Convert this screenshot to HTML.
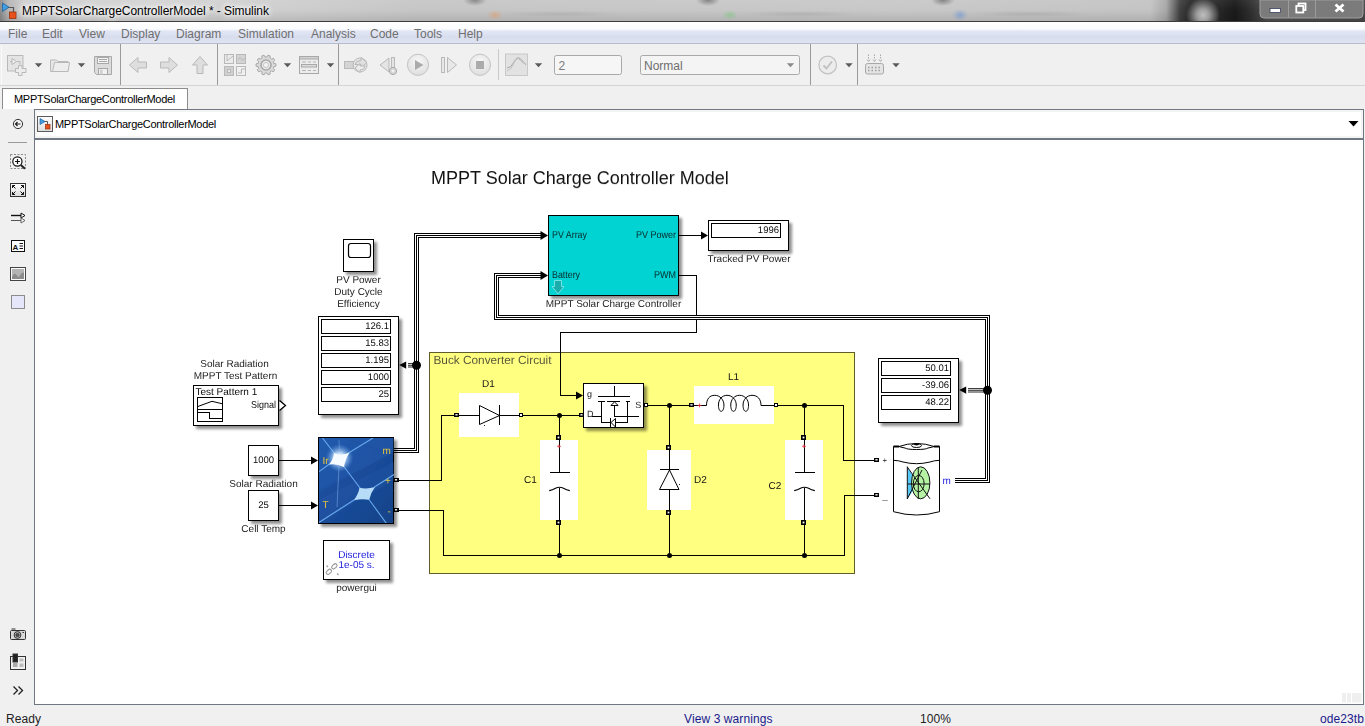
<!DOCTYPE html>
<html><head><meta charset="utf-8"><title>MPPTSolarChargeControllerModel * - Simulink</title>
<style>
html,body{margin:0;padding:0;width:1365px;height:726px;overflow:hidden;background:#f0f0f0;font-family:"Liberation Sans",sans-serif;}
.abs{position:absolute}
#titlebar{position:absolute;left:0;top:0;width:1365px;height:21px;background:radial-gradient(ellipse 8px 5px at 730px 15px,rgba(120,200,120,0.55),rgba(120,200,120,0)),radial-gradient(ellipse 8px 6px at 960px 15px,rgba(90,140,220,0.5),rgba(90,140,220,0)),radial-gradient(ellipse 8px 5px at 495px 15px,rgba(230,150,90,0.5),rgba(230,150,90,0)),radial-gradient(ellipse 12px 6px at 708px 0px,rgba(70,70,70,0.55),rgba(70,70,70,0)),radial-gradient(ellipse 12px 6px at 943px 0px,rgba(70,70,70,0.55),rgba(70,70,70,0)),radial-gradient(ellipse 12px 6px at 475px 0px,rgba(70,70,70,0.5),rgba(70,70,70,0)),radial-gradient(ellipse 60px 3px at 800px 14px,rgba(150,150,150,0.35),rgba(150,150,150,0)),radial-gradient(ellipse 60px 3px at 1030px 14px,rgba(150,150,150,0.35),rgba(150,150,150,0)),radial-gradient(ellipse 60px 3px at 560px 14px,rgba(150,150,150,0.3),rgba(150,150,150,0)),radial-gradient(circle at 1203px 15px,rgba(190,190,190,1) 0,rgba(170,170,170,0.9) 6px,rgba(90,90,90,0) 17px),linear-gradient(180deg,rgba(255,255,255,0.06) 0,rgba(0,0,0,0) 10px,rgba(0,0,0,0.10) 21px),linear-gradient(90deg,#8a8a8a 0px,#b4b4b4 8px,#cdcdcd 24px,#d4d4d4 150px,#cecece 290px,#c6c6c6 420px,#c8c8c8 900px,#c4c4c4 1150px,#a8a8a8 1166px,#404040 1180px,#2a2a2a 1190px,#2a2a2a 1215px,#1a1a1a 1235px,#2e2e2e 1250px,#505050 1268px,#4a4a4a 1365px);}
#titleline{position:absolute;left:0;top:21px;width:1365px;height:1px;background:#3c3c3c}
#title{position:absolute;left:22px;top:3px;font-size:12px;line-height:16px;letter-spacing:-0.06px;color:#000;white-space:nowrap;text-shadow:0 0 4px #fff,0 0 6px #fff,0 0 8px #fff}
#menubar{position:absolute;left:0;top:22px;width:1365px;height:21px;background:linear-gradient(180deg,#ffffff 0px,#fbfcfe 7px,#e3e7f4 9px,#d8ddee 15px,#dfe3f1 21px);border-bottom:1px solid #b6bccc}
#menubar span{position:absolute;top:5px;font-size:12px;line-height:15px;color:#6f6f6f;white-space:nowrap}
#toolbar{position:absolute;left:0;top:44px;width:1365px;height:41px;background:#f0f0f0;border-bottom:1px solid #d4d4d4}
#tab{position:absolute;left:2px;top:88px;width:186px;height:21px;background:#fff;border:1px solid #8c8c8c;border-bottom:none;box-sizing:border-box}
#tab span{position:absolute;left:11px;top:3px;font-size:11px;line-height:14px;letter-spacing:-0.3px;white-space:nowrap;color:#000}
#crumb{position:absolute;left:34px;top:109px;width:1330px;height:31px;background:#fff;border-top:1px solid #6f7783;border-left:1px solid #6f7783;border-right:1px solid #6f7783;border-bottom:2px solid #6f7783;box-sizing:border-box;box-shadow:inset 2px 2px 0 #f4f4f4,inset -2px -2px 0 #f4f4f4}
#crumb span{position:absolute;left:20px;top:7px;font-size:11px;line-height:14px;letter-spacing:-0.3px;white-space:nowrap;color:#000}
#canvas{position:absolute;left:34px;top:140px;width:1330px;height:565px;background:#fff;border-left:1px solid #6f7783;border-right:1px solid #6f7783;border-bottom:1px solid #6f7783;box-sizing:border-box}
#status{position:absolute;left:0;top:705px;width:1365px;height:21px;background:#f0f0f0}
#status span{position:absolute;top:6.5px;font-size:12px;letter-spacing:0.1px;line-height:14px;white-space:nowrap}
svg text{font-family:"Liberation Sans",sans-serif}
</style></head><body>
<div id="titlebar"></div><div id="titleline"></div>
<div id="title">MPPTSolarChargeControllerModel * - Simulink</div>
<div id="menubar">
<span style="left:8px">File</span><span style="left:42px">Edit</span><span style="left:79px">View</span><span style="left:121px">Display</span><span style="left:176px">Diagram</span><span style="left:238px">Simulation</span><span style="left:311px">Analysis</span><span style="left:370px">Code</span><span style="left:414px">Tools</span><span style="left:458px">Help</span>
</div>
<div id="toolbar"></div>
<div id="tab"><span>MPPTSolarChargeControllerModel</span></div>
<div id="crumb"><span>MPPTSolarChargeControllerModel</span></div>
<div id="canvas"></div>
<div id="status"><span style="left:6px;color:#222">Ready</span><span style="left:684px;color:#1a1a8c">View 3 warnings</span><span style="left:920px;color:#222">100%</span><span style="left:1320px;color:#1a1a8c">ode23tb</span></div>
<svg id="ov" class="abs" style="left:0;top:0" width="1365" height="726" viewBox="0 0 1365 726">
<!--CHROME-->
<defs><radialGradient id="btng" cx="0.5" cy="0.35" r="0.7"><stop offset="0" stop-color="#f8f8f8"/><stop offset="1" stop-color="#dcdcdc"/></radialGradient><linearGradient id="icbg" x1="0" y1="0" x2="0" y2="1"><stop offset="0" stop-color="#ffffff"/><stop offset="1" stop-color="#dcdcdc"/></linearGradient></defs>
<g><path d="M5,7.5H13.5V13" fill="none" stroke="#555" stroke-width="1.2"/><polygon points="2.5,3 2.5,11.5 9,7.2" fill="#3f9fe0" stroke="#1f5f9f" stroke-width="0.8"/><rect x="9.5" y="12" width="6.5" height="6.5" fill="#e8501c" stroke="#9c3008" stroke-width="0.8"/></g>
<path d="M1260,0V14Q1260,18 1264,18H1359Q1363,18 1363,14V0z" fill="#7b7b7b" stroke="#a0a0a0" stroke-width="1"/>
<path d="M1288.5,0V17.5M1315.5,0V17.5" stroke="#9c9c9c" stroke-width="1"/>
<rect x="1270" y="8.5" width="10.5" height="4" fill="#fff" stroke="#3a3f5a" stroke-width="0.8"/>
<g fill="none" stroke="#fff" stroke-width="1.8"><rect x="1298.5" y="3.5" width="7" height="6.5"/><rect x="1296.3" y="6" width="7" height="6.5" fill="#7b7b7b"/></g>
<path d="M1335.5,4.5L1343.5,11.5M1343.5,4.5L1335.5,11.5" stroke="#fff" stroke-width="2.8"/>
<path d="M120.5,44V85" stroke="#9a9a9a" stroke-width="1" shape-rendering="crispEdges"/>
<path d="M217.5,44V85" stroke="#9a9a9a" stroke-width="1" shape-rendering="crispEdges"/>
<path d="M338.5,44V85" stroke="#9a9a9a" stroke-width="1" shape-rendering="crispEdges"/>
<path d="M810.5,44V85" stroke="#9a9a9a" stroke-width="1" shape-rendering="crispEdges"/>
<path d="M857.5,44V85" stroke="#9a9a9a" stroke-width="1" shape-rendering="crispEdges"/>
<path d="M498.5,49V80" stroke="#c9c9c9" stroke-width="1" shape-rendering="crispEdges"/>
<path d="M1.5,45V85" stroke="#fafafa" stroke-width="1" shape-rendering="crispEdges"/>
<polygon points="34.8,63.2 42.2,63.2 38.5,67.2" fill="#5a5a5a"/>
<polygon points="77.8,63.2 85.2,63.2 81.5,67.2" fill="#5a5a5a"/>
<polygon points="283.8,63.2 291.2,63.2 287.5,67.2" fill="#5a5a5a"/>
<polygon points="326.8,63.2 334.2,63.2 330.5,67.2" fill="#5a5a5a"/>
<polygon points="534.8,63.2 542.2,63.2 538.5,67.2" fill="#5a5a5a"/>
<polygon points="845.3,63.2 852.7,63.2 849,67.2" fill="#5a5a5a"/>
<polygon points="892.3,63.2 899.7,63.2 896,67.2" fill="#5a5a5a"/>
<g fill="#e4e4e4" stroke="#b9b9b9" stroke-width="1"><rect x="7.5" y="55.5" width="15.5" height="15.5"/><path d="M18.5,65.5h3.5v3h4v4h-4v3h-3.5v-3h-3v-4h3z" fill="#ececec"/><path d="M10,61.5h4M17,61.5h3v3" fill="none"/><polygon points="12,58.5 12,64.5 16.5,61.5" fill="#f0f0f0"/></g>
<g fill="#e6e6e6" stroke="#b9b9b9" stroke-width="1"><path d="M50.5,60v11.5h17.5v-10h-10l-1.5,-1.5z"/><path d="M52.5,71.5l2,-9h15l-1.5,9z" fill="#ededed"/></g>
<g fill="#dcdcdc" stroke="#a8a8a8" stroke-width="1"><path d="M94.5,56.5h17v18h-15l-2,-2z"/><rect x="97.5" y="57.5" width="11" height="6" fill="#f4f4f4"/><path d="M99,59.5h8M99,61.5h8" /><rect x="98.5" y="68.5" width="9" height="6" fill="#f0f0f0"/><rect x="100" y="69.5" width="2.5" height="5" fill="#cfcfcf" stroke="none"/></g>
<g fill="#dedede" stroke="#b9b9b9" stroke-width="1"><path d="M129.5,65l8.5,-7.5v4.5h8.5v6h-8.5v4.5z"/><path d="M177.5,65l-8.5,-7.5v4.5h-8.5v6h8.5v4.5z"/><path d="M200,56.5l-7.5,8.5h4.5v8.500h6v-8.5h4.500z"/></g>
<g fill="#e0e0e0" stroke="#b9b9b9" stroke-width="1"><rect x="224.5" y="54.500" width="9" height="9" fill="#ececec"/><rect x="236.500" y="54.500" width="9" height="9" fill="#d4d4d4"/><rect x="224.500" y="66.5" width="9" height="9" fill="#d0d0d0"/><rect x="236.500" y="66.5" width="9" height="9" fill="#f0f0f0"/><path d="M227,54.500v6.500M227,61l6,-5M238,60q2,-4 3.500,-1t3.500,-1M238,73h3.500v-4h3.500" fill="none"/><rect x="227.500" y="69.500" width="3" height="3" fill="#e8e8e8"/></g>
<polygon points="273.84,63.41 275.93,63.80 275.93,66.20 273.84,66.59 273.28,68.32 274.74,69.87 273.33,71.80 271.41,70.89 269.93,71.97 270.21,74.07 267.93,74.81 266.91,72.95 265.09,72.95 264.07,74.81 261.79,74.07 262.07,71.97 260.59,70.89 258.67,71.80 257.26,69.87 258.72,68.32 258.16,66.59 256.07,66.20 256.07,63.80 258.16,63.41 258.72,61.68 257.26,60.13 258.67,58.20 260.59,59.11 262.07,58.03 261.79,55.93 264.07,55.19 265.09,57.05 266.91,57.05 267.93,55.19 270.21,55.93 269.93,58.03 271.41,59.11 273.33,58.20 274.74,60.13 273.28,61.68" fill="#dadada" stroke="#a8a8a8" stroke-width="1"/><circle cx="266" cy="65" r="5" fill="#ececec" stroke="#a8a8a8" stroke-width="1.6"/><circle cx="266" cy="65" r="2.6" fill="#f2f2f2" stroke="#b9b9b9" stroke-width="0.8"/>
<g fill="#ececec" stroke="#a8a8a8" stroke-width="1"><rect x="299.500" y="56.500" width="19" height="17"/><rect x="299.500" y="56.500" width="19" height="2.500" fill="#d2d2d2"/><rect x="301.500" y="64.500" width="15" height="2.500" fill="#dcdcdc"/><path d="M302,62h4M308,62h3M313,62h3M302,70.500h4M308,70.500h3M313,70.500h3" stroke="#b4b4b4"/></g>
<g fill="#d8d8d8" stroke="#b9b9b9" stroke-width="1"><rect x="344.500" y="61.500" width="9" height="7" fill="#d4d4d4"/><circle cx="360" cy="65" r="7" fill="#e4e4e4"/><path d="M355,64.500q1,-4 6,-4v-3l6,5l-6,5v-3q-3,0 -6,0z" fill="#e0e0e0"/><path d="M365,66.500q-1,3.500 -5,3.500v2.500l-5,-4.500l5,-4.500v2.500h5z" fill="#ececec"/></g>
<g fill="#e4e4e4" stroke="#b9b9b9" stroke-width="1"><polygon points="380,65 389,58 389,72"/><rect x="391.500" y="57.500" width="3" height="15"/><circle cx="393" cy="71" r="3.600" fill="#d8d8d8" stroke="#a8a8a8"/><circle cx="393" cy="71" r="1.200" fill="#f4f4f4" stroke="none"/></g>
<circle cx="418" cy="64.800" r="10.600" fill="url(#btng)" stroke="#c4c4c4" stroke-width="1"/>
<circle cx="480" cy="64.800" r="10.600" fill="url(#btng)" stroke="#c4c4c4" stroke-width="1"/>
<polygon points="415,60 415,70 423.500,65" fill="#ababab"/>
<rect x="476" y="61" width="8" height="8" fill="#ababab"/>
<g fill="#e8e8e8" stroke="#b9b9b9" stroke-width="1"><rect x="441.500" y="57.500" width="3" height="15"/><polygon points="447.500,57.500 447.500,72.500 456.500,65"/></g>
<g fill="#e2e2e2" stroke="#c8c8c8" stroke-width="1"><rect x="505.500" y="54" width="22" height="21.500"/><path d="M507,68q4,0 7,-6t6,-3.500t6,6.500" fill="none" stroke="#a8a8a8"/><path d="M507,71q4,-1 7,-8t6,-3t6,4" fill="none" stroke="#c0c0c0"/></g>
<rect x="554.500" y="55.500" width="67" height="19" rx="2" fill="#f6f6f6" stroke="#a9a9a9" stroke-width="1"/>
<text x="558.500" y="70" font-size="12" fill="#7a7a7a">2</text>
<rect x="640.500" y="55.500" width="159" height="19" rx="2" fill="#f4f4f4" stroke="#a9a9a9" stroke-width="1"/>
<text x="644" y="70" font-size="12" fill="#6e6e6e">Normal</text>
<polygon points="786.8,63.2 794.2,63.2 790.5,67.2" fill="#8a8a8a"/>
<circle cx="827.700" cy="65" r="8.800" fill="#ececec" stroke="#c2c2c2" stroke-width="1.200"/><path d="M823.500,65.500l3,3l5.500,-7" fill="none" stroke="#c0c0c0" stroke-width="1.800"/>
<g stroke="#a8a8a8" stroke-width="1" fill="#e4e4e4"><rect x="865.500" y="63.500" width="18" height="10.500" rx="2"/><path d="M868.500,54.500v5M874.500,54.500v5M880.500,54.500v5" stroke-dasharray="1.500,1"/><path d="M867,59.500l1.500,2l1.500,-2M873,59.500l1.500,2l1.500,-2M879,59.500l1.500,2l1.500,-2" fill="none"/><path d="M868,67.500h1.500M871.500,67.500h1.500M875,67.500h1.500M878.500,67.500h1.500M868,70.500h1.500M871.500,70.500h1.500M875,70.500h1.500M878.500,70.500h1.500" stroke="#a0a0a0" stroke-width="1.500"/></g>
<rect x="37.500" y="116.500" width="15" height="15" fill="url(#icbg)" stroke="#5a5a5a" stroke-width="1"/>
<g><path d="M41,121.500H47.500V125" fill="none" stroke="#555" stroke-width="1"/><polygon points="40,118.500 40,124.500 45,121.500" fill="#3f9fe0" stroke="#1f5f9f" stroke-width="0.700"/><rect x="45.500" y="124.500" width="4.500" height="4.500" fill="#e8501c" stroke="#9c3008" stroke-width="0.700"/></g>
<polygon points="1348.500,121 1358.500,121 1353.500,126.500" fill="#000"/>
<circle cx="18" cy="124" r="4.600" fill="#f4f4f4" stroke="#333" stroke-width="1"/><path d="M15.500,124h5M17.500,122l-2,2l2,2" fill="none" stroke="#222" stroke-width="1.200"/>
<path d="M8,142.500H27" stroke="#9a9a9a" stroke-width="1" shape-rendering="crispEdges"/>
<rect x="10.500" y="154.500" width="15" height="14" fill="none" stroke="#888" stroke-width="1" stroke-dasharray="2,1.500"/><circle cx="17.400" cy="161.500" r="4.600" fill="#fff" stroke="#111" stroke-width="1.200"/><path d="M15,161.500h5M17.500,159v5" stroke="#111" stroke-width="1.200"/><path d="M20.800,165l4.200,3.800" stroke="#222" stroke-width="2"/>
<rect x="10.500" y="183.500" width="15" height="13" fill="url(#icbg)" stroke="#333" stroke-width="1"/><path d="M12.500,188v-2.500h2.500M12.500,185.500l3,3M23.500,188v-2.500h-2.500M23.500,185.500l-3,3M12.500,192v2.500h2.500M12.500,194.500l3,-3M23.500,192v2.500h-2.500M23.500,194.500l-3,-3" fill="none" stroke="#111" stroke-width="1"/>
<path d="M11,215.500h11" stroke="#111" stroke-width="1.400"/><path d="M11,220.500h11" stroke="#555" stroke-width="1"/><path d="M21,213l4,2.500l-4,2.500z" fill="#fff" stroke="#111" stroke-width="1"/><path d="M21,218l4,2.500l-4,2.500z" fill="#fff" stroke="#555" stroke-width="0.900"/>
<rect x="11.500" y="240.500" width="13" height="11" fill="#fff" stroke="#111" stroke-width="1"/><text x="12.500" y="249.500" font-size="8" font-weight="bold" fill="#111">A</text><path d="M19.500,243.500h3.500M19.500,246h3.500M19.500,248.500h3.500" stroke="#111" stroke-width="1"/>
<rect x="10.500" y="267.500" width="15" height="13" fill="#fafafa" stroke="#444" stroke-width="1"/><rect x="12" y="269" width="12" height="10" fill="#b4b4b4"/><path d="M12,277q2,-5.500 4.500,-2t3.500,0.500t4,-3v6.500h-12z" fill="#8c8c8c"/>
<rect x="11.500" y="295.500" width="13" height="13" fill="#e6e6fa" stroke="#8c8c8c" stroke-width="1"/>
<g stroke="#333" stroke-width="1" fill="#d8d8d8"><path d="M11.500,629h4"/><rect x="10.500" y="630.500" width="15" height="9" rx="1"/><circle cx="17.500" cy="635" r="3.400" fill="#bbb"/><circle cx="17.500" cy="635" r="1.600" fill="#555"/><path d="M22.500,632.500h1.500" /></g>
<g stroke="#333" stroke-width="1"><rect x="10.500" y="656.500" width="15" height="13" fill="#f0f0f0"/><rect x="13" y="654" width="4.500" height="8" fill="#222"/><rect x="13" y="663" width="4.500" height="4" fill="#aaa" stroke="none"/><rect x="19.500" y="658.500" width="4" height="3" fill="#bbb" stroke="none"/><rect x="19.500" y="663.500" width="4" height="3.500" fill="#bbb" stroke="none"/></g>
<path d="M13.500,686.500l4,4l-4,4M18.500,686.500l4,4l-4,4" fill="none" stroke="#222" stroke-width="1.300"/>
<g fill="#efefef"><rect x="1342" y="693" width="4" height="9.500"/><rect x="1347" y="693" width="4" height="9.500"/><rect x="1352" y="693" width="9.500" height="9.500"/></g>
<!--/CHROME-->
<g opacity="0.999"><!--DIAGRAM-->
<defs><filter id="sh" x="-20%" y="-20%" width="150%" height="150%"><feGaussianBlur in="SourceAlpha" stdDeviation="1.7"/><feOffset dx="3" dy="2.6"/><feComponentTransfer><feFuncA type="linear" slope="0.45"/></feComponentTransfer><feMerge><feMergeNode/><feMergeNode in="SourceGraphic"/></feMerge></filter>
<linearGradient id="pvg" x1="0" y1="0" x2="1" y2="1"><stop offset="0" stop-color="#1e54a6"/><stop offset="0.5" stop-color="#1a4c9a"/><stop offset="1" stop-color="#154288"/></linearGradient>
<radialGradient id="glow" cx="0.5" cy="0.5" r="0.5"><stop offset="0" stop-color="#fff" stop-opacity="1"/><stop offset="0.35" stop-color="#d8ecff" stop-opacity="0.9"/><stop offset="1" stop-color="#5fa0e8" stop-opacity="0"/></radialGradient>
<clipPath id="pvclip"><rect x="319" y="438" width="75" height="85"/></clipPath>
</defs>
<g shape-rendering="crispEdges">
</g>
<text x="431" y="184" font-size="18" text-anchor="start" fill="#111" transform="rotate(0.03 431 184)" >MPPT Solar Charge Controller Model</text>
<rect x="429.5" y="352.5" width="425" height="221" fill="#ffff80" stroke="#5e5e2c" stroke-width="1" shape-rendering="crispEdges"/>
<text x="433.5" y="364" font-size="11.8" text-anchor="start" fill="#58583a" transform="rotate(0.03 433.5 364)" >Buck Converter Circuit</text>
<g shape-rendering="crispEdges">
<polyline points="394,448.5 414.5,448.5 414.5,233.5 541,233.5" fill="none" stroke="#000" stroke-width="1" />
<polyline points="394,450.5 416.5,450.5 416.5,235.5 541,235.5" fill="none" stroke="#000" stroke-width="1" />
<polyline points="394,452.5 418.5,452.5 418.5,237.5 541,237.5" fill="none" stroke="#000" stroke-width="1" />
<polyline points="955,478.5 985.5,478.5 985.5,319.5 494.5,319.5 494.5,273.5 541,273.5" fill="none" stroke="#000" stroke-width="1" />
<polyline points="955,480.5 987.5,480.5 987.5,317.5 496.5,317.5 496.5,275.5 541,275.5" fill="none" stroke="#000" stroke-width="1" />
<polyline points="955,482.5 989.5,482.5 989.5,315.5 498.5,315.5 498.5,277.5 541,277.5" fill="none" stroke="#000" stroke-width="1" />
</g>
<circle cx="416.5" cy="365.2" r="4.5" fill="#000"/>
<circle cx="987.5" cy="390.2" r="4.5" fill="#000"/>
<path d="M408,363.6H414M968,388.6H985" stroke="#000" stroke-width="0.85" fill="none"/>
<path d="M408,365.3H414M968,390.3H985" stroke="#000" stroke-width="0.85" fill="none"/>
<path d="M408,367.0H414M968,392.0H985" stroke="#000" stroke-width="0.85" fill="none"/>
<polygon points="548,235.5 540.5,231.0 540.5,240.0" fill="#000"/>
<polygon points="548,275.5 540.5,271.0 540.5,280.0" fill="#000"/>
<polygon points="399.2,365.1 406.2,361.40000000000003 406.2,368.8" fill="#000"/>
<polygon points="959.2,390.1 966.2,386.40000000000003 966.2,393.8" fill="#000"/>
<g shape-rendering="crispEdges">
<polyline points="679,275.5 696.5,275.5 696.5,315 696.5,332.5 560.5,332.5 560.5,395.5 577,395.5" fill="none" stroke="#000" stroke-width="1" />
<rect x="695" y="315" width="3" height="5" fill="#fff"/>
<polyline points="690,315.5 703,315.5" fill="none" stroke="#000" stroke-width="1" />
<polyline points="690,317.5 703,317.5" fill="none" stroke="#000" stroke-width="1" />
<polyline points="690,319.5 703,319.5" fill="none" stroke="#000" stroke-width="1" />
<polyline points="696.5,320 696.5,332.5" fill="none" stroke="#000" stroke-width="1" />
<polyline points="679,235.5 702,235.5" fill="none" stroke="#000" stroke-width="1" />
<polyline points="279,460.5 312,460.5" fill="none" stroke="#000" stroke-width="1" />
<polyline points="279,505.5 312,505.5" fill="none" stroke="#000" stroke-width="1" />
<polyline points="398,480.5 441.5,480.5 441.5,415.5 455,415.5" fill="none" stroke="#000" stroke-width="1" />
<polyline points="398,510.5 443.5,510.5 443.5,555.5 844.5,555.5 844.5,495.5 874,495.5" fill="none" stroke="#000" stroke-width="1" />
<polyline points="523,415.5 579,415.5" fill="none" stroke="#000" stroke-width="1" />
<polyline points="648,405.5 690,405.5" fill="none" stroke="#000" stroke-width="1" />
<polyline points="778,405.5 843.5,405.5 843.5,460.5 874,460.5" fill="none" stroke="#000" stroke-width="1" />
<polyline points="559.5,415.5 559.5,436" fill="none" stroke="#000" stroke-width="1" />
<polyline points="559.5,523 559.5,555.5" fill="none" stroke="#000" stroke-width="1" />
<polyline points="669.5,405.5 669.5,446" fill="none" stroke="#000" stroke-width="1" />
<polyline points="669.5,513 669.5,555.5" fill="none" stroke="#000" stroke-width="1" />
<polyline points="804.5,405.5 804.5,436" fill="none" stroke="#000" stroke-width="1" />
<polyline points="804.5,523 804.5,555.5" fill="none" stroke="#000" stroke-width="1" />
</g>
<polygon points="583,395.5 576,391.5 576,399.5" fill="#000"/>
<polygon points="708,235.5 701,231.5 701,239.5" fill="#000"/>
<polygon points="318,460.5 311,456.5 311,464.5" fill="#000"/>
<polygon points="318,505.5 311,501.5 311,509.5" fill="#000"/>
<circle cx="559.5" cy="415.5" r="2.5" fill="#000"/>
<circle cx="669.5" cy="405.5" r="2.5" fill="#000"/>
<circle cx="804.5" cy="405.5" r="2.5" fill="#000"/>
<circle cx="559.5" cy="555.5" r="2.5" fill="#000"/>
<circle cx="669.5" cy="555.5" r="2.5" fill="#000"/>
<circle cx="804.5" cy="555.5" r="2.5" fill="#000"/>
<rect x="343.5" y="239.5" width="30" height="32" fill="#fff" stroke="#000" stroke-width="1" filter="url(#sh)"/>
<rect x="348.5" y="243.5" width="22" height="14" rx="2.5" ry="2.5" fill="#fff" stroke="#000" stroke-width="1.2"/>
<text x="358.5" y="283" font-size="10" text-anchor="middle" fill="#1c1c1c" transform="rotate(0.03 358.5 283)" >PV Power</text>
<text x="358.5" y="295" font-size="10" text-anchor="middle" fill="#1c1c1c" transform="rotate(0.03 358.5 295)" >Duty Cycle</text>
<text x="358.5" y="307" font-size="10" text-anchor="middle" fill="#1c1c1c" transform="rotate(0.03 358.5 307)" >Efficiency</text>
<rect x="318.5" y="316.5" width="80" height="98" fill="#fff" stroke="#000" stroke-width="1" filter="url(#sh)"/>
<rect x="321.5" y="319.5" width="69" height="14" fill="#fff" stroke="#000" stroke-width="1"/>
<text x="389" y="329" font-size="9.5" text-anchor="end" fill="#0a0a0a" transform="rotate(0.03 389 329)" >126.1</text>
<rect x="321.5" y="336.5" width="69" height="14" fill="#fff" stroke="#000" stroke-width="1"/>
<text x="389" y="346" font-size="9.5" text-anchor="end" fill="#0a0a0a" transform="rotate(0.03 389 346)" >15.83</text>
<rect x="321.5" y="353.5" width="69" height="14" fill="#fff" stroke="#000" stroke-width="1"/>
<text x="389" y="363" font-size="9.5" text-anchor="end" fill="#0a0a0a" transform="rotate(0.03 389 363)" >1.195</text>
<rect x="321.5" y="370.5" width="69" height="14" fill="#fff" stroke="#000" stroke-width="1"/>
<text x="389" y="380" font-size="9.5" text-anchor="end" fill="#0a0a0a" transform="rotate(0.03 389 380)" >1000</text>
<rect x="321.5" y="387.5" width="69" height="14" fill="#fff" stroke="#000" stroke-width="1"/>
<text x="389" y="397" font-size="9.5" text-anchor="end" fill="#0a0a0a" transform="rotate(0.03 389 397)" >25</text>
<rect x="708.5" y="220.5" width="80" height="30" fill="#fff" stroke="#000" stroke-width="1" filter="url(#sh)"/>
<rect x="711.5" y="223.5" width="69" height="14" fill="#fff" stroke="#000" stroke-width="1"/>
<text x="779" y="233" font-size="9.5" text-anchor="end" fill="#0a0a0a" transform="rotate(0.03 779 233)" >1996</text>
<text x="749" y="262" font-size="10" text-anchor="middle" fill="#1c1c1c" transform="rotate(0.03 749 262)" >Tracked PV Power</text>
<rect x="878.5" y="358.5" width="80" height="64" fill="#fff" stroke="#000" stroke-width="1" filter="url(#sh)"/>
<rect x="881.5" y="361.5" width="69" height="14" fill="#fff" stroke="#000" stroke-width="1"/>
<text x="949" y="371" font-size="9.5" text-anchor="end" fill="#0a0a0a" transform="rotate(0.03 949 371)" >50.01</text>
<rect x="881.5" y="378.5" width="69" height="14" fill="#fff" stroke="#000" stroke-width="1"/>
<text x="949" y="388" font-size="9.5" text-anchor="end" fill="#0a0a0a" transform="rotate(0.03 949 388)" >-39.06</text>
<rect x="881.5" y="395.5" width="69" height="14" fill="#fff" stroke="#000" stroke-width="1"/>
<text x="949" y="405" font-size="9.5" text-anchor="end" fill="#0a0a0a" transform="rotate(0.03 949 405)" >48.22</text>
<rect x="548.5" y="215.5" width="130" height="80" fill="#00d2d2" stroke="#000" stroke-width="1" filter="url(#sh)"/>
<text x="552" y="238" font-size="10" text-anchor="start" fill="#0a2a2a" transform="rotate(0.03 552 238)" textLength="35" lengthAdjust="spacingAndGlyphs">PV Array</text>
<text x="676" y="238" font-size="10" text-anchor="end" fill="#0a2a2a" transform="rotate(0.03 676 238)" textLength="40" lengthAdjust="spacingAndGlyphs">PV Power</text>
<text x="552" y="278" font-size="10" text-anchor="start" fill="#0a2a2a" transform="rotate(0.03 552 278)" textLength="28" lengthAdjust="spacingAndGlyphs">Battery</text>
<text x="676" y="278" font-size="10" text-anchor="end" fill="#0a2a2a" transform="rotate(0.03 676 278)" textLength="22" lengthAdjust="spacingAndGlyphs">PWM</text>
<text x="613.5" y="307" font-size="10" text-anchor="middle" fill="#1c1c1c" transform="rotate(0.03 613.5 307)" >MPPT Solar Charge Controller</text>
<path d="M554.5 280.5h7v6h2.5l-6 7.5l-6-7.5h2.5z" fill="#1fa8a8" stroke="#7fe6e6" stroke-width="1" opacity="0.9"/>
<text x="234.5" y="367" font-size="10" text-anchor="middle" fill="#1c1c1c" transform="rotate(0.03 234.5 367)" >Solar Radiation</text>
<text x="235.5" y="379" font-size="10" text-anchor="middle" fill="#1c1c1c" transform="rotate(0.03 235.5 379)" >MPPT Test Pattern</text>
<rect x="193.5" y="385.5" width="85" height="40" fill="#fff" stroke="#000" stroke-width="1" filter="url(#sh)"/>
<text x="195.5" y="395" font-size="10" text-anchor="start" fill="#0a0a0a" transform="rotate(0.03 195.5 395)" >Test Pattern 1</text>
<text x="276" y="408" font-size="10" text-anchor="end" fill="#0a0a0a" transform="rotate(0.03 276 408)" textLength="25" lengthAdjust="spacingAndGlyphs">Signal</text>
<rect x="197.5" y="397.5" width="25" height="24" fill="#fff" stroke="#000" stroke-width="1"/>
<polyline points="197.6,406.6 212,401.3 222.4,403.8" fill="none" stroke="#000" stroke-width="1" />
<polyline points="198,409.5 222,409.5" fill="none" stroke="#000" stroke-width="1" shape-rendering="crispEdges"/>
<polyline points="198,412.5 209.5,412.5 209.5,418.5 222,418.5" fill="none" stroke="#000" stroke-width="1" shape-rendering="crispEdges"/>
<polyline points="279.5,400.5 285.5,405.5 279.5,410.5" fill="#fff" stroke="#000" stroke-width="1.3"/>
<rect x="248.5" y="445.5" width="30" height="30" fill="#fff" stroke="#000" stroke-width="1" filter="url(#sh)"/>
<text x="263.5" y="463" font-size="9.5" text-anchor="middle" fill="#0a0a0a" transform="rotate(0.03 263.5 463)" >1000</text>
<text x="263.5" y="487" font-size="10" text-anchor="middle" fill="#1c1c1c" transform="rotate(0.03 263.5 487)" >Solar Radiation</text>
<rect x="248.5" y="490.5" width="30" height="30" fill="#fff" stroke="#000" stroke-width="1" filter="url(#sh)"/>
<text x="263.5" y="508" font-size="9.5" text-anchor="middle" fill="#0a0a0a" transform="rotate(0.03 263.5 508)" >25</text>
<text x="263.5" y="532" font-size="10" text-anchor="middle" fill="#1c1c1c" transform="rotate(0.03 263.5 532)" >Cell Temp</text>
<rect x="318.5" y="437.5" width="75" height="86" fill="url(#pvg)" stroke="#000" stroke-width="1" filter="url(#sh)"/>
<g clip-path="url(#pvclip)">
<polygon points="319,438 394,438 394,452 319,492" fill="#2c66bc" opacity="0.30"/>
<polygon points="319,500 394,462 394,480 319,523" fill="#2a60b4" opacity="0.25"/>
<g stroke="#1b4a96" stroke-width="0.6" opacity="0.5"><path d="M330,523L394,480M340,523L394,490M319,490L360,470M350,440L394,455"/></g>
<g stroke="#66a8ec" stroke-width="1.15" fill="none" stroke-linecap="round"><path d="M322.5,438L334.5,453.5"/><path d="M348.5,453L373,438"/><path d="M329.5,464L318.5,472"/><path d="M343.5,466L360,488"/><path d="M374.5,487L394,474.5"/><path d="M354,500L319,522.5"/><path d="M369,499.5L386.500,523.500"/></g>
<ellipse cx="339.500" cy="458" rx="14" ry="14" fill="url(#glow)"/>
<path d="M339,466L337,507" stroke="#8fc0f4" stroke-width="1" opacity="0.45"/>
<path d="M339,440L339.500,452" stroke="#8fc0f4" stroke-width="1" opacity="0.4"/>
<path d="M334,453 Q341,456.500 349.500,452.500 Q345,460 344,467 Q337,463.500 329,464.500 Q333.500,459 334,453z" fill="#f6fbff"/>
<path d="M359.500,487.800 Q367,489.500 375,487 Q370.500,493 369.200,499.800 Q361.500,498.500 353.800,500.300 Q358.500,494 359.500,487.800z" fill="#b6dcf8"/>
</g>
<text x="322.5" y="464" font-size="10" text-anchor="start" fill="#e6c63a" transform="rotate(0.03 322.5 464)" >Ir</text>
<text x="322.5" y="508" font-size="10" text-anchor="start" fill="#e6c63a" transform="rotate(0.03 322.5 508)" >T</text>
<text x="382.5" y="454" font-size="10" text-anchor="start" fill="#e6c63a" transform="rotate(0.03 382.5 454)" >m</text>
<text x="385" y="484" font-size="10" text-anchor="start" fill="#e6c63a" transform="rotate(0.03 385 484)" >+</text>
<text x="387.5" y="514.5" font-size="10" text-anchor="start" fill="#e6c63a" transform="rotate(0.03 387.5 514.5)" >-</text>
<rect x="393.5" y="478" width="5" height="4" fill="#000" shape-rendering="crispEdges"/><rect x="394.9" y="479.1" width="2.2" height="1.4" fill="#fff"/>
<rect x="393.5" y="508" width="5" height="4" fill="#000" shape-rendering="crispEdges"/><rect x="394.9" y="509.1" width="2.2" height="1.4" fill="#fff"/>
<rect x="323.5" y="540.5" width="66" height="39" fill="#fff" stroke="#000" stroke-width="1" filter="url(#sh)"/>
<text x="356.5" y="558" font-size="10" text-anchor="middle" fill="#2222dd" transform="rotate(0.03 356.5 558)" >Discrete</text>
<text x="356.5" y="568" font-size="10" text-anchor="middle" fill="#2222dd" transform="rotate(0.03 356.5 568)" >1e-05 s.</text>
<text x="356.5" y="591" font-size="10" text-anchor="middle" fill="#1c1c1c" transform="rotate(0.03 356.5 591)" >powergui</text>
<g stroke="#9a9a9a" stroke-width="1.1" fill="none"><rect x="326" y="570" width="6" height="3.6" rx="1.8" transform="rotate(-45 329 572)"/><rect x="331.5" y="564.5" width="6" height="3.6" rx="1.8" transform="rotate(-45 334.5 566.5)"/><path d="M326.5,565.5l1.5,1.5M337,573.5l1.5,1.5"/></g>
<rect x="459" y="393" width="60" height="44" fill="#fff"/>
<text x="488.5" y="387" font-size="10" text-anchor="middle" fill="#111" transform="rotate(0.03 488.5 387)" >D1</text>
<polyline points="459,415.5 519,415.5" fill="none" stroke="#000" stroke-width="1" shape-rendering="crispEdges"/>
<polygon points="479.5,405.5 479.5,424.5 499.5,415.5" fill="#fff" stroke="#000" stroke-width="1"/>
<polyline points="499.5,405 499.5,425" fill="none" stroke="#000" stroke-width="1" shape-rendering="crispEdges"/>
<rect x="484" y="425" width="1" height="1" fill="#222"/>
<rect x="454.0" y="413" width="5" height="4" fill="#000" shape-rendering="crispEdges"/><rect x="455.4" y="414.1" width="2.2" height="1.4" fill="#fff"/>
<rect x="519.5" y="413.5" width="3" height="3" fill="#fff" stroke="#000" stroke-width="1" shape-rendering="crispEdges"/>
<rect x="583.5" y="383.5" width="60" height="44" fill="#fff" stroke="#000" stroke-width="1" filter="url(#sh)"/>
<text x="587" y="397" font-size="9" text-anchor="start" fill="#222" transform="rotate(0.03 587 397)" >g</text>
<text x="587" y="417" font-size="9" text-anchor="start" fill="#222" transform="rotate(0.03 587 417)" >D</text>
<text x="635.3" y="408" font-size="9" text-anchor="start" fill="#222" transform="rotate(0.03 635.3 408)" >S</text>
<g shape-rendering="crispEdges" stroke="#000" stroke-width="1" fill="none">
<path d="M614.5,385.5v11M598,396.5h31.5M598,401.5h7M607,401.5h13M625.5,401.5h4M601.5,401v22M627.5,401v22M601.5,422.5h9M615.5,422.5h12.5M592,416.5h9.5M614.5,404v12.5h24"/>
</g>
<polygon points="614.5,402 610.8,405.5 618.2,405.5" fill="#fff" stroke="#000" stroke-width="1"/>
<path d="M615.5,418.5v8.5M615.5,418.5l-4.500,4l4.500,4.500" fill="none" stroke="#000" stroke-width="1"/>
<polyline points="610.5,418 610.5,427" fill="none" stroke="#000" stroke-width="1" shape-rendering="crispEdges"/>
<rect x="579.0" y="413" width="5" height="4" fill="#000" shape-rendering="crispEdges"/><rect x="580.4" y="414.1" width="2.2" height="1.4" fill="#fff"/>
<rect x="644.5" y="403.5" width="3" height="3" fill="#fff" stroke="#000" stroke-width="1" shape-rendering="crispEdges"/>
<rect x="694" y="386" width="80" height="38" fill="#fff"/>
<text x="733.5" y="380" font-size="10" text-anchor="middle" fill="#111" transform="rotate(0.03 733.5 380)" >L1</text>
<path d="M694,405.5H706.5C706.5,399 709.5,395.3 714.7,395.3 C720.2,395.3 723.95,400 723.95,405 C723.95,409 722.8000000000001,411.3 721.2,411.3 C719.6,411.3 718.45,409 718.45,405 C718.45,399.500 722,395.3 727,395.3 C732.5,395.3 736.25,400 736.25,405 C736.25,409 735.1,411.3 733.5,411.3 C731.9,411.3 730.75,409 730.75,405 C730.75,399.500 734.5,395.3 739.5,395.3 C745.0,395.3 748.55,400 748.55,405 C748.55,409 747.4,411.3 745.8,411.3 C744.1999999999999,411.3 743.05,409 743.05,405 C743.05,399.500 747,395.3 752,395.3 C757.5,395.3 761,399 761,405.5 H774" fill="none" stroke="#000" stroke-width="1"/>
<path d="M697.6,405.4h3.8M699.5,403.5v3.8" stroke="#f0303c" stroke-width="1" opacity="0.85"/>
<rect x="689.0" y="403" width="5" height="4" fill="#000" shape-rendering="crispEdges"/><rect x="690.4" y="404.1" width="2.2" height="1.4" fill="#fff"/>
<rect x="774.5" y="403.5" width="3" height="3" fill="#fff" stroke="#000" stroke-width="1" shape-rendering="crispEdges"/>
<rect x="540" y="440" width="38" height="80" fill="#fff"/>
<g shape-rendering="crispEdges">
<polyline points="559.5,440 559.5,472" fill="none" stroke="#000" stroke-width="1" />
<polyline points="549.5,472.5 569.5,472.5" fill="none" stroke="#000" stroke-width="1" />
<polyline points="559.5,488 559.5,520" fill="none" stroke="#000" stroke-width="1" />
</g>
<path d="M549.2,490.6 Q552.5,490 555.5,488.2 Q557.5,487.3 559.5,487.3 Q561.5,487.3 563.5,488.2 Q566.5,490 569.8,490.6" fill="none" stroke="#000" stroke-width="1.1"/>
<path d="M557.1,446.3h3.8M559.0,444.4v3.8" stroke="#f0303c" stroke-width="1" opacity="0.85"/>
<rect x="556.0" y="435.0" width="5" height="5" fill="#000" shape-rendering="crispEdges"/><rect x="557.6" y="436.6" width="1.8" height="1.8" fill="#fff"/>
<rect x="556.0" y="520.0" width="5" height="5" fill="#000" shape-rendering="crispEdges"/><rect x="557.6" y="521.6" width="1.8" height="1.8" fill="#fff"/>
<text x="524" y="483" font-size="10" text-anchor="start" fill="#111" transform="rotate(0.03 524 483)" >C1</text>
<rect x="785" y="440" width="38" height="80" fill="#fff"/>
<g shape-rendering="crispEdges">
<polyline points="804.5,440 804.5,472" fill="none" stroke="#000" stroke-width="1" />
<polyline points="794.5,472.5 814.5,472.5" fill="none" stroke="#000" stroke-width="1" />
<polyline points="804.5,488 804.5,520" fill="none" stroke="#000" stroke-width="1" />
</g>
<path d="M794.2,490.6 Q797.5,490 800.5,488.2 Q802.5,487.3 804.5,487.3 Q806.5,487.3 808.5,488.2 Q811.5,490 814.8,490.6" fill="none" stroke="#000" stroke-width="1.1"/>
<path d="M802.1,446.3h3.8M804.0,444.4v3.8" stroke="#f0303c" stroke-width="1" opacity="0.85"/>
<rect x="801.0" y="435.0" width="5" height="5" fill="#000" shape-rendering="crispEdges"/><rect x="802.6" y="436.6" width="1.8" height="1.8" fill="#fff"/>
<rect x="801.0" y="520.0" width="5" height="5" fill="#000" shape-rendering="crispEdges"/><rect x="802.6" y="521.6" width="1.8" height="1.8" fill="#fff"/>
<text x="768.5" y="489" font-size="10" text-anchor="start" fill="#111" transform="rotate(0.03 768.5 489)" >C2</text>
<rect x="647" y="450" width="44" height="60" fill="#fff"/>
<text x="694" y="483" font-size="10" text-anchor="start" fill="#111" transform="rotate(0.03 694 483)" >D2</text>
<g shape-rendering="crispEdges">
<polyline points="669.5,450 669.5,510" fill="none" stroke="#000" stroke-width="1" />
<polyline points="659.5,469.5 679,469.5" fill="none" stroke="#000" stroke-width="1" />
</g>
<polygon points="669.5,470 659.5,489.5 679,489.5" fill="#fff" stroke="#000" stroke-width="1"/>
<rect x="679" y="484" width="1" height="1" fill="#222"/>
<rect x="666.0" y="445.0" width="5" height="5" fill="#000" shape-rendering="crispEdges"/><rect x="667.6" y="446.6" width="1.8" height="1.8" fill="#fff"/>
<rect x="666.0" y="510.0" width="5" height="5" fill="#000" shape-rendering="crispEdges"/><rect x="667.6" y="511.6" width="1.8" height="1.8" fill="#fff"/>
<g fill="#fff" stroke="#000" stroke-width="1">
<path d="M893.5,446.500 V511.700 Q905,515 916.500,515 Q928,515 939.500,511.700 V446.500 H934 Q926,443.500 916.500,443.500 Q907,443.500 899,446.500z"/>
<path d="M899,446.500 Q902,447.500 905,448 Q907,449.500 916.500,449.500 Q926,449.500 928,448 Q931,447.500 934,446.500" fill="none"/>
<path d="M893.500,460.300 Q899,460.500 903,462 Q910,463.700 916.500,463.700 Q923,463.700 930,462 Q934,460.500 939.500,460.300" fill="none"/>
<ellipse cx="916.500" cy="445.600" rx="5" ry="1.900"/>
</g>
<path d="M893.500,446.500h5.500M934,446.500h5.500" stroke="#000" stroke-width="1.800"/>
<ellipse cx="916.500" cy="444.300" rx="2.600" ry="1.100" fill="#000"/>
<polygon points="907.300,467 907.300,498.800 918.300,483.500" fill="#58c8f8"/>
<ellipse cx="920.700" cy="482.800" rx="9.200" ry="16" fill="#b6f2a4" stroke="#111" stroke-width="1"/>
<g fill="none" stroke="#111" stroke-width="1"><ellipse cx="918.700" cy="483.600" rx="5.400" ry="8.200"/><path d="M907.300,467 L930,498.800M907.300,498.800 L922,470M907.300,484H930M918.300,467V499M907.300,466.500V499"/></g>
<text x="942.5" y="484" font-size="10" text-anchor="start" fill="#2222dd" transform="rotate(0.03 942.5 484)" >m</text>
<rect x="874.0" y="458" width="5" height="4" fill="#000" shape-rendering="crispEdges"/><rect x="875.4" y="459.1" width="2.2" height="1.4" fill="#fff"/>
<rect x="874.0" y="493" width="5" height="4" fill="#000" shape-rendering="crispEdges"/><rect x="875.4" y="494.1" width="2.2" height="1.4" fill="#fff"/>
<text x="882.6" y="463" font-size="8" text-anchor="start" fill="#2a2a2a" transform="rotate(0.03 882.6 463)" >+</text>
<text x="882.2" y="503.2" font-size="10" text-anchor="start" fill="#3a3a3a" transform="rotate(0.03 882.2 503.2)" >–</text>
<!--/DIAGRAM--></g>
</svg>
</body></html>
